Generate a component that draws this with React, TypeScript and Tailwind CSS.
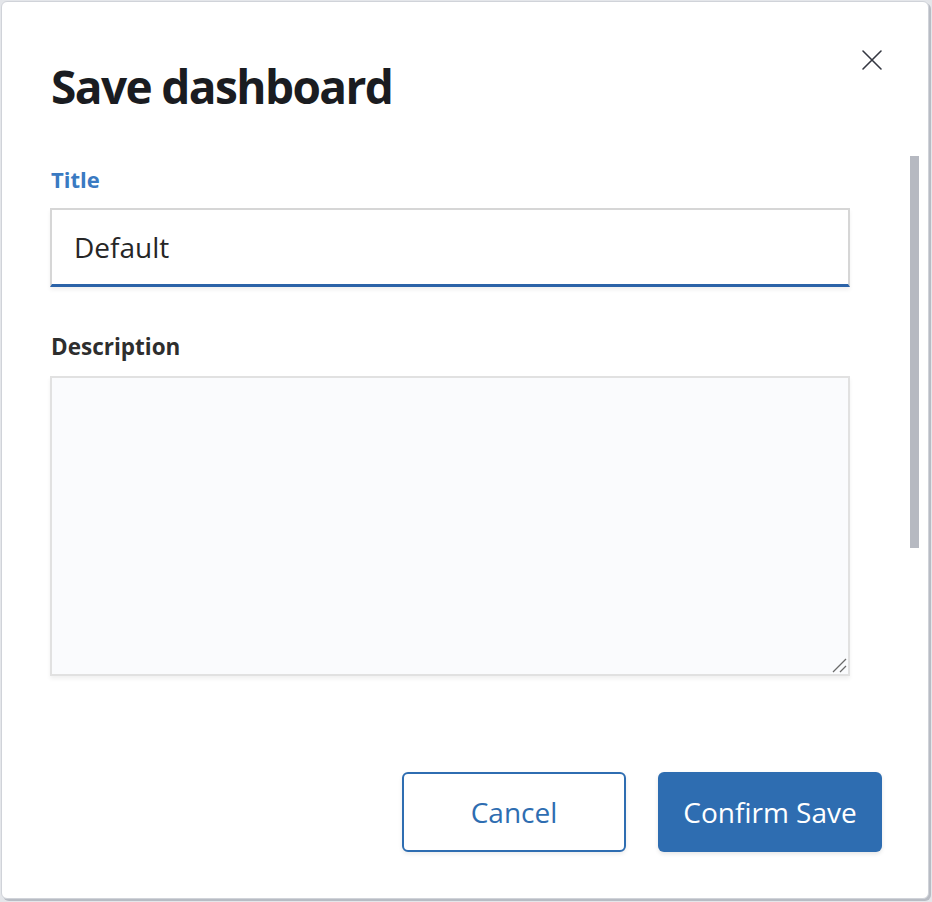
import React from "react";

export default function App() {
  return (
    <div className="w-[932px] h-[902px] bg-[#e4e6ea] p-px" style={{ fontFamily: '"Open Sans", "Noto Sans", sans-serif' }}>
      <div className="relative w-[928px] h-[898px] bg-white rounded-[6px] border border-[#d0d3d9] shadow-[2px_2px_0_#b8bcc4] flex flex-col">
        <button className="absolute left-[858px] top-[46px] w-[24px] h-[24px] flex items-center justify-center text-[#343741]">
          <svg width="22" height="22" viewBox="0 0 22 22" fill="none" stroke="currentColor" strokeWidth="1.6" strokeLinecap="round">
            <path d="M2 2 L20 20 M20 2 L2 20" />
          </svg>
        </button>
        <div className="absolute left-[908px] top-[154px] w-[9px] h-[392px] bg-[#b6b9c1]" />
        <h1 className="pl-[49px] pt-[54px] text-[46px] leading-[60px] font-bold tracking-[-0.035em] text-[#1a1c21]">Save dashboard</h1>
        <div className="pl-[48px] pr-[78px]">
          <div className="mt-[49px] text-[22px] leading-[28px] font-bold text-[#3a7ac2] pl-px">Title</div>
          <div className="mt-[15px] h-[79px] border-2 border-[#d6d6d6] border-b-[3px] border-b-[#2b63a8] bg-white flex items-center pl-[22px] text-[28px] text-[#262626] shadow-[0_3px_4px_rgba(0,0,0,0.06)]">
            Default
          </div>
          <div className="mt-[46px] text-[22.5px] leading-[28px] font-bold text-[#2e2e2e] pl-px">Description</div>
          <div className="relative mt-[15px] h-[300px] border-2 border-[#e1e1e1] bg-[#fafbfd] shadow-[0_3px_4px_rgba(0,0,0,0.06)]">
            <svg className="absolute right-[1px] bottom-[1px]" width="16" height="16" viewBox="0 0 16 16" stroke="#6a6a6a" strokeWidth="1.3">
              <path d="M2 15 L15 2 M9 15 L15 9" />
            </svg>
          </div>
        </div>
        <div className="flex justify-end gap-[32px] pr-[46px] mt-[96px]">
          <button className="w-[224px] h-[80px] rounded-[6px] border-2 border-[#2e6db1] bg-white text-[#2e6db1] text-[28px] shadow-[0_2px_4px_rgba(0,0,0,0.08)]">Cancel</button>
          <button className="w-[224px] h-[80px] rounded-[6px] bg-[#2e6db1] text-white text-[28px] shadow-[0_2px_4px_rgba(0,0,0,0.1)]">Confirm Save</button>
        </div>
      </div>
    </div>
  );
}
